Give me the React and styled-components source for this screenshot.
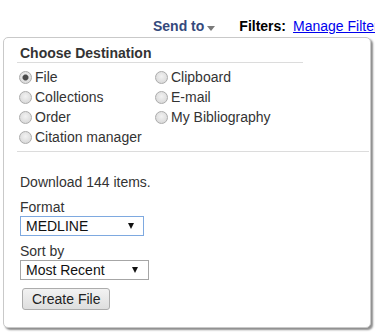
import React, { useState } from "react";
import styled, { createGlobalStyle } from "styled-components";

const GlobalStyle = createGlobalStyle`
  html, body {
    margin: 0;
    padding: 0;
    background: #fff;
    overflow: hidden;
  }
  body {
    font-family: "Liberation Sans", Arial, sans-serif;
    font-size: 14px;
    color: #333;
  }
`;

const Page = styled.div`
  position: relative;
  width: 375px;
  height: 333px;
  overflow: hidden;
`;

const Toolbar = styled.div`
  display: flex;
  align-items: flex-start;
  padding: 18px 0 0 153px;
  line-height: 16px;
  white-space: nowrap;
`;

const SendTo = styled.span`
  font-weight: bold;
  color: #34497c;
`;

const Caret = styled.span`
  width: 0;
  height: 0;
  margin: 8px 0 0 3px;
  border-left: 4.5px solid transparent;
  border-right: 4.5px solid transparent;
  border-top: 5px solid #7a7a7a;
`;

const FiltersLabel = styled.span`
  margin-left: 24px;
  font-weight: bold;
  color: #000;
`;

const ManageLink = styled.a`
  margin-left: 7px;
  color: #00e;
  text-decoration: underline;
`;

const Panel = styled.div`
  position: absolute;
  left: 3px;
  top: 37px;
  width: 368px;
  box-sizing: border-box;
  padding: 7px 0 17px 13px;
  background: #fff;
  border: 1px solid #c9c9c9;
  border-radius: 5px;
  box-shadow: 2px 2px 2px rgba(0, 0, 0, 0.45);
`;

const PanelTitle = styled.h3`
  width: 286px;
  box-sizing: border-box;
  margin: 0;
  padding: 0 0 1px 3px;
  font-size: 14px;
  line-height: 16px;
  font-weight: bold;
  color: #333;
  border-bottom: 1px solid #dcdcdc;
`;

const RadioGrid = styled.div`
  display: grid;
  grid-template-columns: 136px auto;
  grid-template-rows: repeat(4, 20px);
  grid-auto-flow: column;
  margin: 4px 0 0 2px;
`;

const RadioRow = styled.label`
  display: flex;
  align-items: center;
  gap: 3px;
  line-height: 16px;
  color: #333;
`;

const Radio = styled.input.attrs({ type: "radio" })`
  appearance: none;
  -webkit-appearance: none;
  box-sizing: border-box;
  width: 13px;
  height: 13px;
  margin: 0;
  border-radius: 50%;
  border: 1px solid #ababab;
  background: radial-gradient(circle at 50% 40%, #f2f2f2, #d3d3d3);

  &:checked {
    background: radial-gradient(circle, #4a4a4a 0 2.3px, #9a9a9a 3px, transparent 3.6px),
      radial-gradient(circle at 50% 40%, #f2f2f2, #d3d3d3);
  }
`;

const Divider = styled.div`
  height: 1px;
  margin: 4px 1px 0 0;
  background: #dcdcdc;
`;

const Body = styled.div`
  padding-left: 3px;
  line-height: 16px;
`;

const Text = styled.div`
  margin-top: ${(p) => p.$gap}px;
  color: #333;
`;

const SelectBox = styled.div`
  display: flex;
  align-items: center;
  justify-content: space-between;
  box-sizing: border-box;
  width: ${(p) => p.$width}px;
  height: 20px;
  margin-top: 1px;
  padding: 0 ${(p) => p.$right}px 0 5px;
  border: 1px solid ${(p) => (p.$focused ? "#7ea9e0" : "#a6a6a6")};
  background: #fff;
  color: #111;
`;

const SelectArrow = styled.span`
  width: 0;
  height: 0;
  border-left: 3.5px solid transparent;
  border-right: 3.5px solid transparent;
  border-top: 6px solid #111;
`;

const Button = styled.button`
  display: block;
  box-sizing: border-box;
  height: 22px;
  margin: 8px 0 0 2px;
  padding: 0 9px;
  font-family: "Liberation Sans", Arial, sans-serif;
  font-size: 14px;
  color: #222;
  border: 1px solid #acacac;
  border-radius: 3px;
  background: linear-gradient(#f2f2f2, #dedede);
`;

const destinations = [
  "File",
  "Collections",
  "Order",
  "Citation manager",
  "Clipboard",
  "E-mail",
  "My Bibliography",
];

export default function App() {
  const [dest, setDest] = useState("File");

  return (
    <Page>
      <GlobalStyle />
      <Toolbar>
        <SendTo>Send to</SendTo>
        <Caret />
        <FiltersLabel>Filters:</FiltersLabel>
        <ManageLink href="#">Manage Filters</ManageLink>
      </Toolbar>

      <Panel>
        <PanelTitle>Choose Destination</PanelTitle>
        <RadioGrid>
          {destinations.map((d) => (
            <RadioRow key={d}>
              <Radio
                name="dest"
                checked={dest === d}
                onChange={() => setDest(d)}
              />
              {d}
            </RadioRow>
          ))}
        </RadioGrid>
        <Divider />
        <Body>
          <Text $gap={22}>Download 144 items.</Text>
          <Text $gap={9}>Format</Text>
          <SelectBox $width={124} $right={9} $focused>
            MEDLINE
            <SelectArrow />
          </SelectBox>
          <Text $gap={7}>Sort by</Text>
          <SelectBox $width={129} $right={10}>
            Most Recent
            <SelectArrow />
          </SelectBox>
          <Button>Create File</Button>
        </Body>
      </Panel>
    </Page>
  );
}
